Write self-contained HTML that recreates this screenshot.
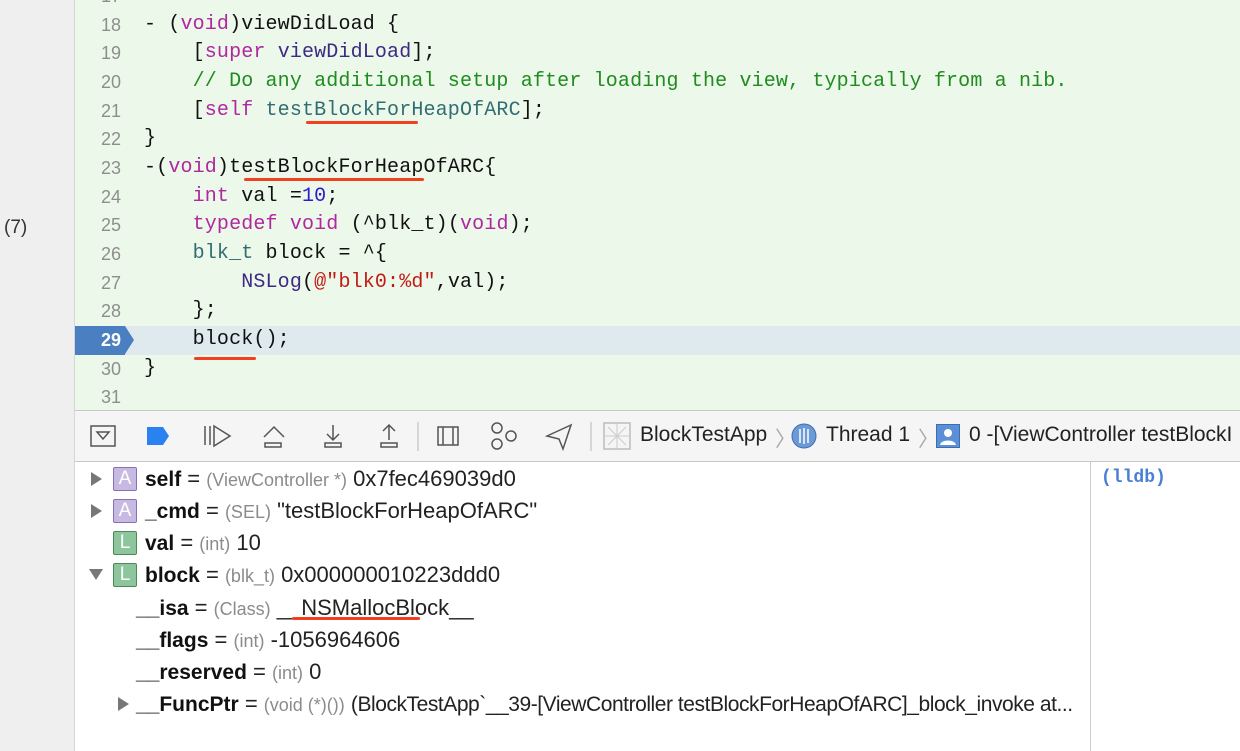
<!DOCTYPE html>
<html><head><meta charset="utf-8"><style>
body{margin:0;width:1240px;height:751px;overflow:hidden;background:#fff;font-family:"Liberation Sans",sans-serif;position:relative}
#side{position:absolute;left:0;top:0;width:74px;height:751px;background:#efefef;border-right:1px solid #d6d6d6}
#side span{position:absolute;left:4px;top:217px;font-size:19px;color:#333}
#ed{position:absolute;left:75px;top:0;width:1165px;height:410px;background:#ecf8e9;border-bottom:1px solid #c8c8c8}
.ln{position:absolute;left:0;width:46px;text-align:right;font-size:18px;color:#8e8e8e;height:28.67px;line-height:28.67px}
.cd{position:absolute;left:69px;font-family:"Liberation Mono",monospace;font-size:20px;letter-spacing:0.15px;height:28.67px;line-height:28.67px;white-space:pre;color:#111}
.k{color:#b0279f}.m{color:#3e2a85}.p{color:#326d74}.c{color:#1f8c1f}.s{color:#c41a16}.n{color:#2e1bd0}
#hl{position:absolute;left:0;top:326px;width:1165px;height:29px;background:#dfeaee}
#mk{position:absolute;left:0;top:326px;width:50px;height:29px;background:#4a7fc1}
#mk:after{content:"";position:absolute;left:50px;top:0;border-left:9px solid #4a7fc1;border-top:14.5px solid transparent;border-bottom:14.5px solid transparent}
.u{position:absolute;height:3px;background:#f0401e;border-radius:2px}
#tb{position:absolute;left:75px;top:411px;width:1165px;height:50px;background:#f5f5f5;border-bottom:1px solid #c8c8c8}
#tb .t{position:absolute;top:12px;font-size:21px;color:#222;white-space:nowrap}
#vars{position:absolute;left:75px;top:462px;width:1015px;height:289px;border-right:1px solid #ccc;overflow:hidden}
.r{position:absolute;height:32px;line-height:32px;font-size:22px;color:#222;white-space:nowrap}
.r b{font-weight:bold;color:#111;font-size:21px}.g{color:#8b8b8b;font-size:18px}
.tri{position:absolute;left:16px;width:0;height:0}
.ic{position:absolute;left:38px;top:4px;width:22px;height:22px;border:1px solid;border-radius:2px;font-size:19px;line-height:22px;text-align:center}
.A{background:#c8b9e2;border-color:#8a70b6;color:#fff}
.L{background:#8dc59d;border-color:#4c8a5c;color:#fff}
</style></head><body>
<div id="side"><span>(7)</span></div>
<div id="ed">
<div id="hl"></div><div id="mk"></div>
<div class="ln" style="top:-18px">17</div><div class="ln" style="top:10.67px">18</div><div class="ln" style="top:39.33px">19</div><div class="ln" style="top:68px">20</div><div class="ln" style="top:96.67px">21</div><div class="ln" style="top:125.33px">22</div><div class="ln" style="top:154px">23</div><div class="ln" style="top:182.67px">24</div><div class="ln" style="top:211.33px">25</div><div class="ln" style="top:240px">26</div><div class="ln" style="top:268.67px">27</div><div class="ln" style="top:297.33px">28</div><div class="ln" style="top:326px;color:#fff;font-weight:bold">29</div><div class="ln" style="top:354.67px">30</div><div class="ln" style="top:383.33px">31</div>
<div class="cd" style="top:10.67px">- (<span class="k">void</span>)viewDidLoad {</div>
<div class="cd" style="top:39.33px">    [<span class="k">super</span> <span class="m">viewDidLoad</span>];</div>
<div class="cd c" style="top:68px">    // Do any additional setup after loading the view, typically from a nib.</div>
<div class="cd" style="top:96.67px">    [<span class="k">self</span> <span class="p">testBlockForHeapOfARC</span>];</div>
<div class="cd" style="top:125.33px">}</div>
<div class="cd" style="top:154px">-(<span class="k">void</span>)testBlockForHeapOfARC{</div>
<div class="cd" style="top:182.67px">    <span class="k">int</span> val =<span class="n">10</span>;</div>
<div class="cd" style="top:211.33px">    <span class="k">typedef</span> <span class="k">void</span> (^blk_t)(<span class="k">void</span>);</div>
<div class="cd" style="top:240px">    <span class="p">blk_t</span> block = ^{</div>
<div class="cd" style="top:268.67px">        <span class="m">NSLog</span>(<span class="s">@"blk0:%d"</span>,val);</div>
<div class="cd" style="top:297.33px">    };</div>
<div class="cd" style="top:326px">    block();</div>
<div class="cd" style="top:354.67px">}</div>
<div class="u" style="left:231px;top:121px;width:112px"></div>
<div class="u" style="left:169px;top:178px;width:180px"></div>
<div class="u" style="left:119px;top:357px;width:62px"></div>
</div>
<div id="tb">
<svg width="600" height="50" style="position:absolute;left:0;top:0" fill="none" stroke="#555" stroke-width="1.5">
<rect x="16" y="15" width="24" height="20"/><path d="M22 21h12l-6 7z"/>
<path d="M72 16h16l6 9-6 9H72z" fill="#2a82f0" stroke="none"/>
<path d="M130 15v19M135 15v19M139 15l16 10-16 10z"/>
<path d="M189 26l10-10 10 10M190 32h16v4h-16z"/>
<path d="M258 14v15M252 23l6 6 6-6M250 32h16v4h-16z"/>
<path d="M314 14v15M308 20l6-6 6 6M306 32h16v4h-16z"/>
<path d="M343 11v29" stroke="#ccc"/>
<path d="M363 16h20v18h-20zM368 16v18M378 16v18"/>
<circle cx="422" cy="17" r="5"/><circle cx="422" cy="33" r="5"/><circle cx="436" cy="25" r="5"/>
<path d="M472 25l24-11-8 24-4-10z"/>
<path d="M516 11v29" stroke="#ccc"/>
<rect x="529" y="12" width="26" height="26" stroke="#bbb"/><path d="M529 25h26M542 12v26M533 16l18 18M551 16l-18 18" stroke="#ccc" stroke-width="1"/>
</svg>
<span class="t" style="left:565px">BlockTestApp</span>
<span class="t" style="left:700px;color:#aaa">〉</span>
<svg width="26" height="26" style="position:absolute;left:716px;top:12px"><circle cx="13" cy="13" r="12" fill="#6c9ad6" stroke="#3d6fb3"/><path d="M9 6v14M13 5v16M17 6v14" stroke="#fff" stroke-width="1.5"/></svg>
<span class="t" style="left:751px">Thread 1</span>
<span class="t" style="left:843px;color:#aaa">〉</span>
<svg width="24" height="24" style="position:absolute;left:861px;top:13px"><rect x="0.5" y="0.5" width="23" height="23" fill="#5b8fd6" stroke="#3b6db5"/><circle cx="12" cy="9" r="4" fill="#fff"/><path d="M4 21c1-6 15-6 16 0z" fill="#fff"/></svg>
<span class="t" style="left:894px">0 -[ViewController testBlockI</span>
</div>
<div id="vars">
<div class="r" style="top:1px;left:0;width:1000px"><span class="tri" style="top:9px;border-left:11px solid #777;border-top:7px solid transparent;border-bottom:7px solid transparent"></span><span class="ic A">A</span><span style="position:absolute;left:70px"><b>self</b> = <span class="g">(ViewController *)</span> 0x7fec469039d0</span></div>
<div class="r" style="top:33px;left:0;width:1000px"><span class="tri" style="top:9px;border-left:11px solid #777;border-top:7px solid transparent;border-bottom:7px solid transparent"></span><span class="ic A">A</span><span style="position:absolute;left:70px"><b>_cmd</b> = <span class="g">(SEL)</span> "testBlockForHeapOfARC"</span></div>
<div class="r" style="top:65px;left:0;width:1000px"><span class="ic L">L</span><span style="position:absolute;left:70px"><b>val</b> = <span class="g">(int)</span> 10</span></div>
<div class="r" style="top:97px;left:0;width:1000px"><span class="tri" style="top:10px;left:14px;border-top:11px solid #777;border-left:7px solid transparent;border-right:7px solid transparent"></span><span class="ic L">L</span><span style="position:absolute;left:70px"><b>block</b> = <span class="g">(blk_t)</span> 0x000000010223ddd0</span></div>
<div class="r" style="top:130px;left:61px"><b>__isa</b> = <span class="g">(Class)</span> __NSMallocBlock__</div>
<div class="r" style="top:162px;left:61px"><b>__flags</b> = <span class="g">(int)</span> -1056964606</div>
<div class="r" style="top:194px;left:61px"><b>__reserved</b> = <span class="g">(int)</span> 0</div>
<div class="r" style="top:226px;left:0;width:1010px"><span class="tri" style="top:9px;left:43px;border-left:11px solid #777;border-top:7px solid transparent;border-bottom:7px solid transparent"></span><span style="position:absolute;left:61px"><b>__FuncPtr</b> = <span class="g">(void (*)())</span> <span style="font-size:21px;letter-spacing:-0.45px">(BlockTestApp`__39-[ViewController testBlockForHeapOfARC]_block_invoke at...</span></span></div>
<div class="u" style="left:217px;top:155px;width:128px;height:3px"></div>
</div>
<div style="position:absolute;left:1101px;top:468px;font-family:'Liberation Mono',monospace;font-weight:bold;font-size:18px;color:#4a7fd6">(lldb)</div>
</body></html>
